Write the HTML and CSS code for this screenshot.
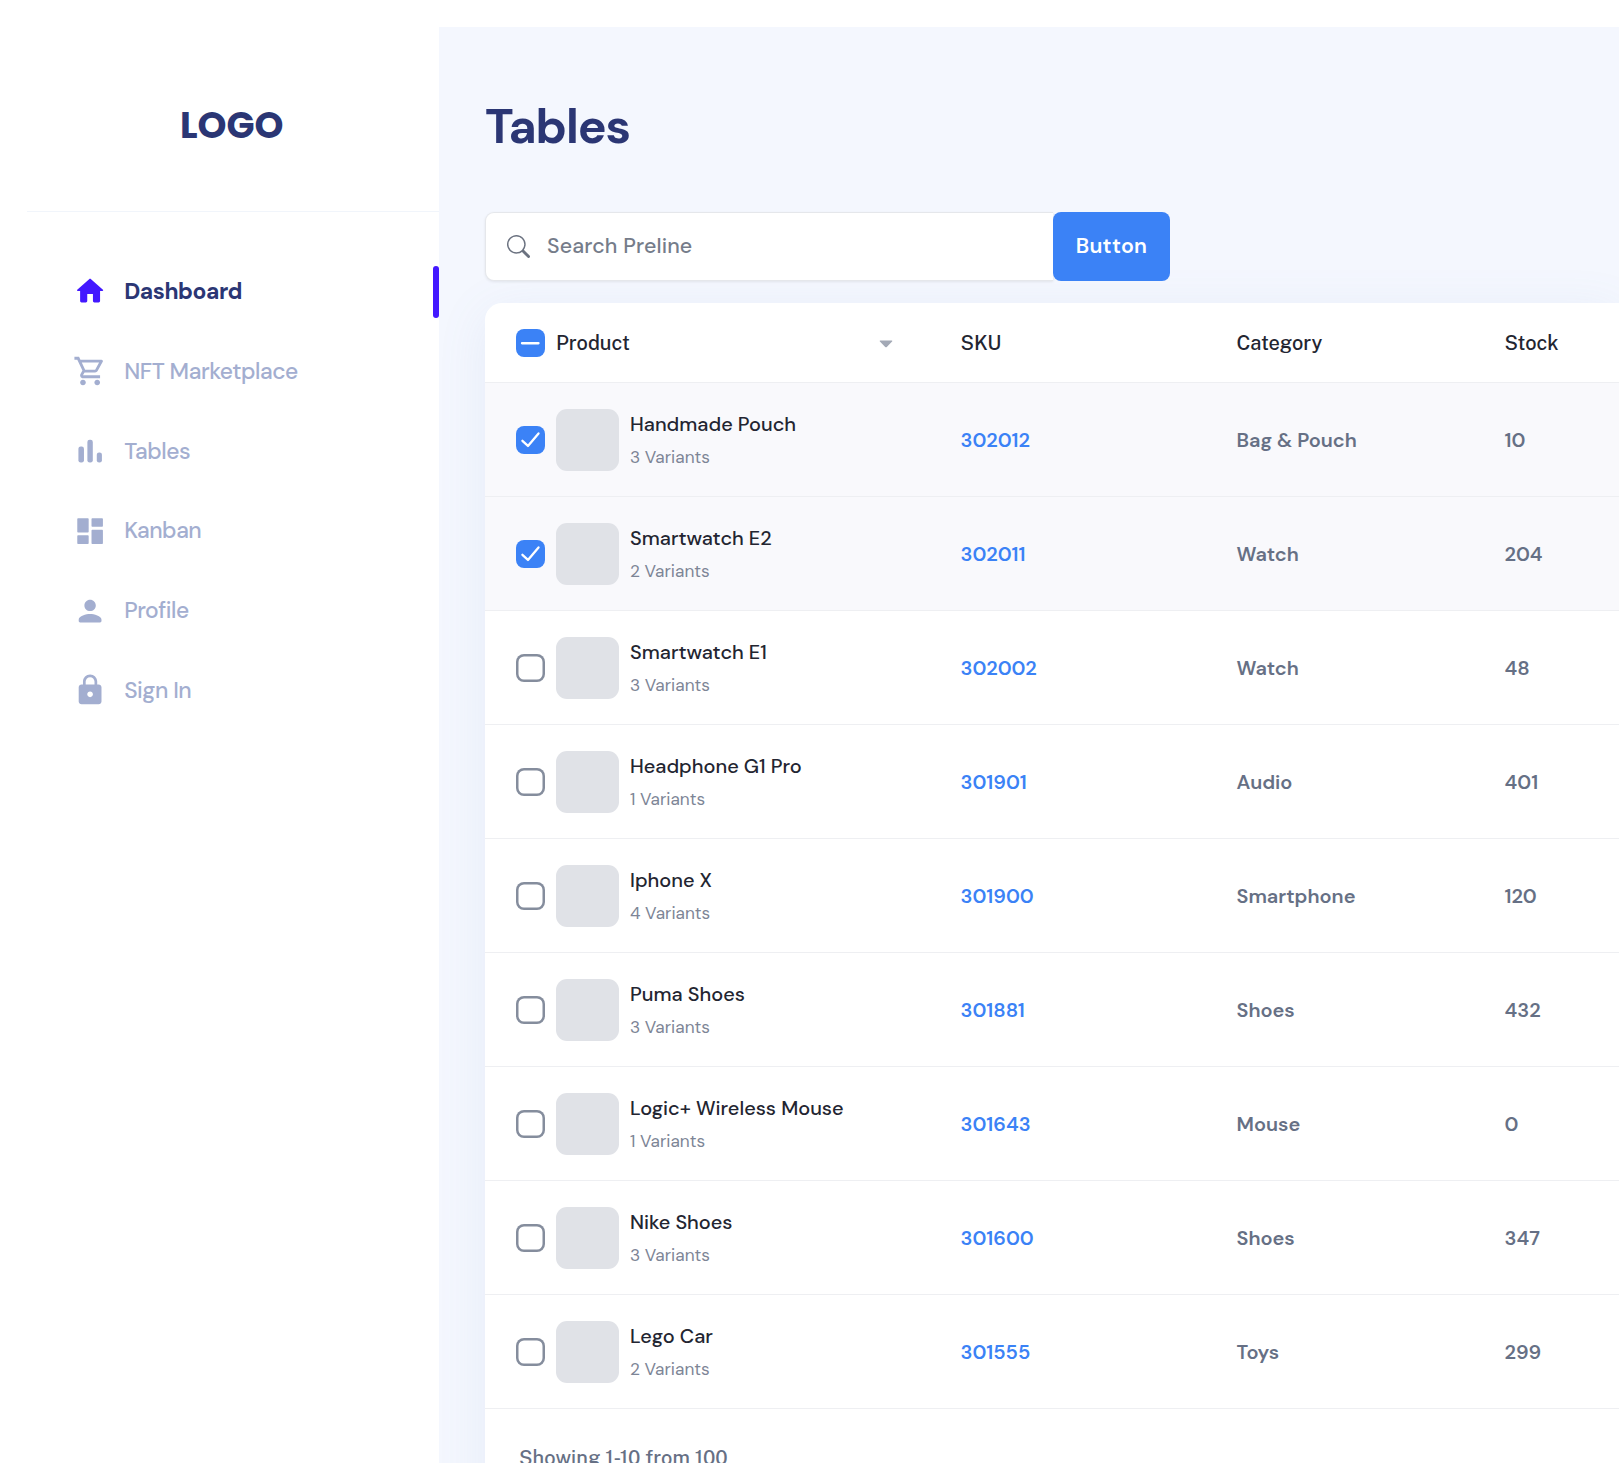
FILE: index.html
```html
<!DOCTYPE html>
<html lang="en">
<head>
<meta charset="utf-8">
<title>Tables</title>
<link rel="stylesheet" href="styles.css">
</head>
<body>
<div class="app">
  <aside class="sidebar">
    <div class="brand">LOGO</div>
    <nav class="nav">
      <a class="nav-item active"><svg class="nav-icon" viewBox="0 0 24 24"><path d="M10 19v-5h4v5c0 .55.45 1 1 1h3c.55 0 1-.45 1-1v-7h1.7c.46 0 .68-.57.33-.87L12.67 3.6c-.38-.34-.96-.34-1.34 0l-8.36 7.53c-.34.3-.13.87.33.87H5v7c0 .55.45 1 1 1h3c.55 0 1-.45 1-1z"/></svg>Dashboard</a>
      <a class="nav-item"><svg class="nav-icon" viewBox="0 0 24 24"><path d="M15.55 13c.75 0 1.41-.41 1.75-1.03l3.58-6.49A.996.996 0 0 0 20.01 4H5.21l-.94-2H1v2h2l3.6 7.59-1.35 2.44C4.52 15.37 5.48 17 7 17h12v-2H7l1.1-2h7.45zM6.16 6h12.15l-2.76 5H8.53L6.16 6zM7 18c-1.1 0-1.99.9-1.99 2S5.9 22 7 22s2-.9 2-2-.9-2-2-2zm10 0c-1.1 0-1.99.9-1.99 2s.89 2 1.99 2 2-.9 2-2-.9-2-2-2z"/></svg>NFT Marketplace</a>
      <a class="nav-item"><svg class="nav-icon" viewBox="0 0 24 24"><rect x="3.8" y="8.8" width="3.9" height="11.2" rx="1.6"/><rect x="10.1" y="4" width="3.8" height="16" rx="1.6"/><rect x="16.7" y="13" width="3.6" height="7" rx="1.6"/></svg>Tables</a>
      <a class="nav-item"><svg class="nav-icon" viewBox="0 0 24 24"><path d="M3.500 13h7c.28 0 .5-.22.5-.5v-9c0-.28-.22-.5-.5-.5h-7c-.28 0-.5.22-.5.5v9c0 .28.22.5.5.5zm0 8h7c.28 0 .5-.22.5-.5v-5c0-.28-.22-.5-.5-.5h-7c-.28 0-.5.22-.5.5v5c0 .28.22.5.5.5zm10 0h7c.28 0 .5-.22.5-.5v-9c0-.28-.22-.5-.5-.5h-7c-.28 0-.5.22-.5.5v9c0 .28.22.5.5.5zM13 3.500v5c0 .28.22.5.5.5h7c.28 0 .5-.22.5-.5v-5c0-.28-.22-.5-.5-.5h-7c-.28 0-.5.22-.5.5z"/></svg>Kanban</a>
      <a class="nav-item"><svg class="nav-icon" viewBox="0 0 24 24"><path d="M12 12c2.21 0 4-1.79 4-4s-1.79-4-4-4-4 1.79-4 4 1.79 4 4 4zm0 2c-2.67 0-8 1.34-8 4v1c0 .55.45 1 1 1h14c.55 0 1-.45 1-1v-1c0-2.66-5.33-4-8-4z"/></svg>Profile</a>
      <a class="nav-item"><svg class="nav-icon" viewBox="0 0 24 24"><path d="M18 8h-1V6c0-2.76-2.24-5-5-5S7 3.240 7 6v2H6c-1.100 0-2 .9-2 2v10c0 1.100.9 2 2 2h12c1.100 0 2-.9 2-2V10c0-1.100-.9-2-2-2zm-6 9c-1.100 0-2-.9-2-2s.9-2 2-2 2 .9 2 2-.9 2-2 2zM8.900 8V6c0-1.710 1.390-3.100 3.100-3.100s3.100 1.390 3.100 3.100v2H8.900z"/></svg>Sign In</a>
    </nav>
  </aside>
  <main class="main">
    <h1 class="title">Tables</h1>
    <form class="search">
      <label class="search-field">
        <svg class="search-icon" viewBox="0 0 16 16"><path d="M11.742 10.344a6.500 6.500 0 1 0-1.397 1.398h-.001c.03.04.062.078.098.115l3.850 3.850a1 1 0 0 0 1.415-1.414l-3.850-3.850a1.007 1.007 0 0 0-.115-.1zM12 6.500a5.500 5.500 0 1 1-11 0 5.500 5.500 0 0 1 11 0z"/></svg>
        <input class="search-input" type="text" placeholder="Search Preline">
      </label>
      <button class="search-button" type="button">Button</button>
    </form>
    <section class="card">
      <div class="row head">
        <div class="product"><span class="check on"><svg viewBox="0 0 20 20"><path d="M4.200 10h11.600"/></svg></span><span class="head-label">Product</span><svg class="sort" viewBox="0 0 14 8"><path d="M1.300.5h11.400c.6 0 .8.7.4 1.100L7.800 7c-.45.4-1.150.4-1.600 0L.9 1.600C.5 1.200.7.500 1.300.5z"/></svg></div>
        <div>SKU</div><div>Category</div><div>Stock</div>
      </div>
      <div class="row selected"><div class="product"><span class="check on"><svg viewBox="0 0 20 20"><path d="M4.500 10.400l3.900 3.600 7.400-8.800"/></svg></span><span class="thumb"></span><div class="info"><div class="name">Handmade Pouch</div><div class="variants">3 Variants</div></div></div><a class="sku">302012</a><div class="cell">Bag &amp; Pouch</div><div class="cell">10</div></div>
      <div class="row selected"><div class="product"><span class="check on"><svg viewBox="0 0 20 20"><path d="M4.500 10.400l3.900 3.600 7.400-8.800"/></svg></span><span class="thumb"></span><div class="info"><div class="name">Smartwatch E2</div><div class="variants">2 Variants</div></div></div><a class="sku">302011</a><div class="cell">Watch</div><div class="cell">204</div></div>
      <div class="row"><div class="product"><span class="check"></span><span class="thumb"></span><div class="info"><div class="name">Smartwatch E1</div><div class="variants">3 Variants</div></div></div><a class="sku">302002</a><div class="cell">Watch</div><div class="cell">48</div></div>
      <div class="row"><div class="product"><span class="check"></span><span class="thumb"></span><div class="info"><div class="name">Headphone G1 Pro</div><div class="variants">1 Variants</div></div></div><a class="sku">301901</a><div class="cell">Audio</div><div class="cell">401</div></div>
      <div class="row"><div class="product"><span class="check"></span><span class="thumb"></span><div class="info"><div class="name">Iphone X</div><div class="variants">4 Variants</div></div></div><a class="sku">301900</a><div class="cell">Smartphone</div><div class="cell">120</div></div>
      <div class="row"><div class="product"><span class="check"></span><span class="thumb"></span><div class="info"><div class="name">Puma Shoes</div><div class="variants">3 Variants</div></div></div><a class="sku">301881</a><div class="cell">Shoes</div><div class="cell">432</div></div>
      <div class="row"><div class="product"><span class="check"></span><span class="thumb"></span><div class="info"><div class="name">Logic+ Wireless Mouse</div><div class="variants">1 Variants</div></div></div><a class="sku">301643</a><div class="cell">Mouse</div><div class="cell">0</div></div>
      <div class="row"><div class="product"><span class="check"></span><span class="thumb"></span><div class="info"><div class="name">Nike Shoes</div><div class="variants">3 Variants</div></div></div><a class="sku">301600</a><div class="cell">Shoes</div><div class="cell">347</div></div>
      <div class="row"><div class="product"><span class="check"></span><span class="thumb"></span><div class="info"><div class="name">Lego Car</div><div class="variants">2 Variants</div></div></div><a class="sku">301555</a><div class="cell">Toys</div><div class="cell">299</div></div>
      <div class="footer">Showing 1-10 from 100</div>
    </section>
  </main>
</div>
</body>
</html>
```
FILE: styles.css
```css
* {
  box-sizing: border-box;
}

body {
  margin: 0;
  height: 1463px;
  overflow: hidden;
  background: #fff;
  font-family: "DM Sans", Inter, sans-serif;
  padding: 27px 0 0 27px;
}

.app {
  display: flex;
  height: 1436px;
  overflow: hidden;
}

.sidebar {
  flex: none;
  width: 412px;
  background: #fff;
  border-top-left-radius: 43px;
  position: relative;
  z-index: 1;
}

.brand {
  height: 185px;
  border-bottom: 1px solid #f1f5fb;
  padding: 76px 0 0 153px;
  color: #2b3674;
  font: 700 36.800px/44px Poppins, Inter, sans-serif;
}

.nav {
  padding-top: 39.600px;
}

.nav-item {
  display: flex;
  align-items: center;
  gap: 17px;
  height: 79.800px;
  padding-left: 46px;
  color: #a3aed0;
  font-size: 22.800px;
  font-weight: 500;
  line-height: 33px;
  letter-spacing: -0.020em;
}

.nav-icon {
  width: 34.200px;
  height: 34.200px;
  fill: #a3aed0;
}

.active {
  color: #2b3674;
  font-weight: 700;
}

.active::after {
  content: "";
  width: 6px;
  height: 52px;
  margin: 2px 0 0 auto;
  border-radius: 3px;
  background: #4318ff;
}

.active .nav-icon {
  fill: #4318ff;
}

.main {
  flex: 1;
  min-width: 0;
  padding: 72px 0 0 46px;
  background: #f4f7fe;
}

.title {
  margin: 0;
  color: #2b3674;
  font-size: 48.100px;
  font-weight: 700;
  line-height: 56px;
  letter-spacing: -0.023em;
}

.search {
  display: flex;
  width: 685px;
  height: 68.500px;
  margin-top: 57px;
}

.search-field {
  display: flex;
  flex: 1;
  align-items: center;
  gap: 17px;
  padding-left: 21px;
  border: 1px solid #e5e7eb;
  border-right: 0;
  border-radius: 9px 0 0 9px;
  background: #fff;
  box-shadow: 0 1px 3px rgba(0, 0, 0, 0.08);
}

.search-icon {
  width: 23px;
  height: 23px;
  fill: #6b7280;
}

.search-input {
  flex: 1;
  min-width: 0;
  height: 30px;
  padding: 0;
  border: 0;
  outline: 0;
  background: none;
  font: 500 21.375px/30px "DM Sans", Inter, sans-serif;
  letter-spacing: 0.150px;
}

.search-input::placeholder {
  color: #757c8a;
  opacity: 1;
}

.search-button {
  position: relative;
  width: 117px;
  padding: 0;
  border: 0;
  border-radius: 8px;
  background: #3b82f6;
  color: #fff;
  font: 600 21.375px/30px "DM Sans", Inter, sans-serif;
  letter-spacing: 0.300px;
}

.card {
  height: 1300px;
  margin-top: 22.500px;
  overflow: hidden;
  border-radius: 17px 0 0;
  background: #fff;
  box-shadow: 0 10px 50px rgba(112, 136, 200, 0.1);
}

.row {
  display: grid;
  grid-template-columns: 444.500px 276px 268px 1fr;
  align-items: center;
  height: 114px;
  padding-left: 31px;
  border-bottom: 1px solid #eeeff2;
}

.head {
  height: 80px;
  color: #232531;
  font-family: "Public Sans", Inter, sans-serif;
  font-size: 19.950px;
  font-weight: 500;
}

.selected {
  background: #f9f9fc;
}

.product {
  display: flex;
  align-items: center;
}

.check {
  width: 28.500px;
  height: 28.500px;
  margin-top: 1px;
  border-radius: 8px;
  box-shadow: inset 0 0 0 2.500px #858d9d;
}

.on {
  background: #3b82f6;
  box-shadow: none;
}

.on svg {
  display: block;
  width: 100%;
  height: 100%;
  fill: none;
  stroke: #fff;
  stroke-width: 1.600;
  stroke-linecap: round;
  stroke-linejoin: round;
}

.head-label {
  margin-left: 11.500px;
}

.sort {
  width: 14px;
  height: 8px;
  margin: 2px 67.500px 0 auto;
  fill: #a3a9b6;
}

.thumb {
  width: 62.500px;
  height: 62.500px;
  margin: 1px 11.500px 0;
  border-radius: 11px;
  background: #e0e2e7;
}

.name {
  margin: -1px 0 1px;
  color: #232531;
  font-size: 19.950px;
  font-weight: 500;
  line-height: 34px;
}

.variants {
  color: #7d8596;
  font-size: 17.250px;
  line-height: 30px;
}

.sku,
.cell {
  font-size: 19.950px;
  font-weight: 600;
}

.sku {
  color: #3b82f6;
}

.cell {
  color: #667085;
}

.footer {
  padding: 35px 0 0 34px;
  color: #667085;
  font-family: "Public Sans", Inter, sans-serif;
  font-size: 19.950px;
  font-weight: 500;
  line-height: 28px;
  letter-spacing: 0.060px;
}
```
